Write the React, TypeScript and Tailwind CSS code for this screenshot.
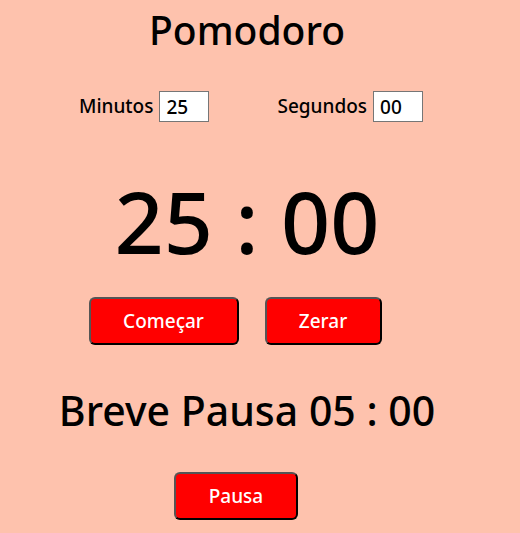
import * as React from "react";

const font = { fontFamily: '"Noto Sans", "DejaVu Sans", sans-serif' };

function Field({ label, value }: { label: string; value: string }) {
    return (
        <label className="flex items-center gap-[6px] text-[19px] text-black">
            {label}
            <input
                defaultValue={value}
                className="w-[50px] h-[31px] border border-[#767676] bg-white px-[6px] text-[19px] text-black outline-none"
            />
        </label>
    );
}

function RedButton({ children, className }: { children: React.ReactNode; className: string }) {
    return (
        <button
            className={`h-[48px] rounded-[6px] border-2 border-[#555555] border-r-black border-b-black bg-[#ff0000] text-[19px] font-medium text-white ${className}`}
        >
            {children}
        </button>
    );
}

export default function App() {
    return (
        <div className="w-[520px] h-[533px] bg-[#fec2ad] overflow-hidden font-medium" style={font}>
            <div className="w-[494px] flex flex-col items-center">
                <h1 className="mt-[4px] text-[39px] leading-[52px] text-black">Pomodoro</h1>

                {/* minutes / seconds inputs */}
                <div className="mt-[35px] ml-[8px] flex items-center gap-[68px]">
                    <Field label="Minutos" value="25" />
                    <Field label="Segundos" value="00" />
                </div>

                {/* main timer */}
                <div className="mt-[49px] text-[86px] leading-[100px] text-black">25 : 00</div>

                <div className="mt-[26px] flex gap-[26px] -ml-[24px]">
                    <RedButton className="w-[150px]">Começar</RedButton>
                    <RedButton className="w-[117px]">Zerar</RedButton>
                </div>

                <div className="mt-[37px] text-[41px] leading-[56px] text-black">Breve Pausa 05 : 00</div>

                <div className="mt-[34px] -ml-[22px]">
                    <RedButton className="w-[124px]">Pausa</RedButton>
                </div>
            </div>
        </div>
    );
}
